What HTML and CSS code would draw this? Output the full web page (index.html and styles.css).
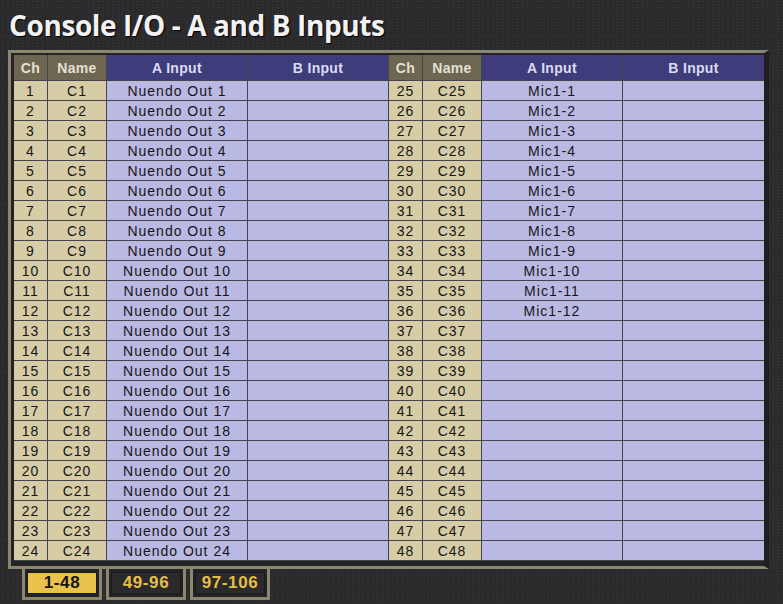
FILE: index.html
```html
<!DOCTYPE html>
<html>
<head>
<meta charset="utf-8">
<link rel="stylesheet" href="styles.css">
</head>
<body>
<h1 class="title">Console I/O - A and B Inputs</h1>
<div class="panel">
  <div class="grid" id="grid">
    <div class="hd tan">Ch</div><div class="hd tan">Name</div><div class="hd blue">A Input</div><div class="hd blue">B Input</div>
    <div class="hd tan">Ch</div><div class="hd tan">Name</div><div class="hd blue">A Input</div><div class="hd blue last">B Input</div>
  </div>
</div>
<div class="tabs">
  <div class="tab"><span class="tab-box active">1-48</span></div>
  <div class="tab"><span class="tab-box">49-96</span></div>
  <div class="tab"><span class="tab-box">97-106</span></div>
</div>
<script>
(function(){
  var g = document.getElementById('grid');
  var html = '';
  for (var i = 1; i <= 24; i++) {
    var j = i + 24;
    html += '<div class="c k">' + i + '</div>';
    html += '<div class="c k">C' + i + '</div>';
    html += '<div class="c l">Nuendo Out ' + i + '</div>';
    html += '<div class="c l"></div>';
    html += '<div class="c k">' + j + '</div>';
    html += '<div class="c k">C' + j + '</div>';
    html += '<div class="c l">' + (i <= 12 ? 'Mic1-' + i : '') + '</div>';
    html += '<div class="c l last"></div>';
  }
  g.insertAdjacentHTML('beforeend', html);
})();
</script>
</body>
</html>
```

FILE: styles.css
```css
html, body {
  margin: 0;
  padding: 0;
}
body {
  width: 783px;
  height: 604px;
  overflow: hidden;
  background-color: #2c2b2e;
  background-image:
    radial-gradient(rgba(255,255,255,0.03) 1px, transparent 1px),
    radial-gradient(rgba(0,0,0,0.12) 1px, transparent 1px);
  background-size: 5px 3px, 3px 7px;
  background-position: 0 0, 2px 1px;
  font-family: "Liberation Sans", Arial, sans-serif;
}
.title {
  margin: 0;
  height: 50px;
  box-sizing: border-box;
  padding: 8px 0 0 9px;
  font-family: "Open Sans", "Lato", sans-serif;
  font-weight: 700;
  font-size: 28px;
  line-height: 34px;
  letter-spacing: -0.4px;
  color: #f2f2f2;
  text-shadow: 1px 1px 1px #000;
}
.panel {
  margin-left: 8px;
  width: fit-content;
  border-top: 3px solid #8b866e;
  border-left: 3px solid #8b866e;
  border-bottom: 3px solid #8b866e;
  border-right: 5px solid #1f1e21;
  padding: 2px 0 5px 3px;
  background: #242326;
}
.grid {
  display: grid;
  grid-template-columns: 34px 59px 141px 141px 34px 59px 141px 141px;
  grid-template-rows: 26px repeat(24, 20px);
}
.grid > div {
  box-sizing: border-box;
  border-right: 1px solid #45444c;
  border-bottom: 1px solid #45444c;
  display: flex;
  align-items: center;
  justify-content: center;
  white-space: nowrap;
  overflow: hidden;
}
.grid > div.last {
  border-right: none;
}
.hd {
  font-weight: 700;
  font-size: 14px;
  letter-spacing: 0.3px;
}
.hd.tan {
  background: #6d6751;
  color: #e4e0d4;
}
.hd.blue {
  background: #3e3c7b;
  color: #dcdcf2;
}
.c {
  font-size: 14px;
  letter-spacing: 1px;
  color: #161616;
  padding-top: 1px;
}
.c.k {
  background: #d6cca6;
}
.c.l {
  background: #b9b9e3;
}
.tabs {
  display: flex;
  gap: 4px;
  margin-left: 22px;
}
.tab {
  width: 80px;
  height: 31px;
  box-sizing: border-box;
  border: 3px solid #8b866e;
  border-top: none;
  padding: 3px 2px 3px 2px;
  background: #232225;
  display: flex;
}
.tab-box {
  flex: 1;
  display: flex;
  align-items: center;
  justify-content: center;
  font-weight: 700;
  font-size: 17px;
  letter-spacing: 0.6px;
  color: #e6bf45;
  background: #2a292c;
  border: 1px solid #1c1b1e;
}
.tab-box.active {
  background: #e8c24b;
  color: #141414;
}
```
